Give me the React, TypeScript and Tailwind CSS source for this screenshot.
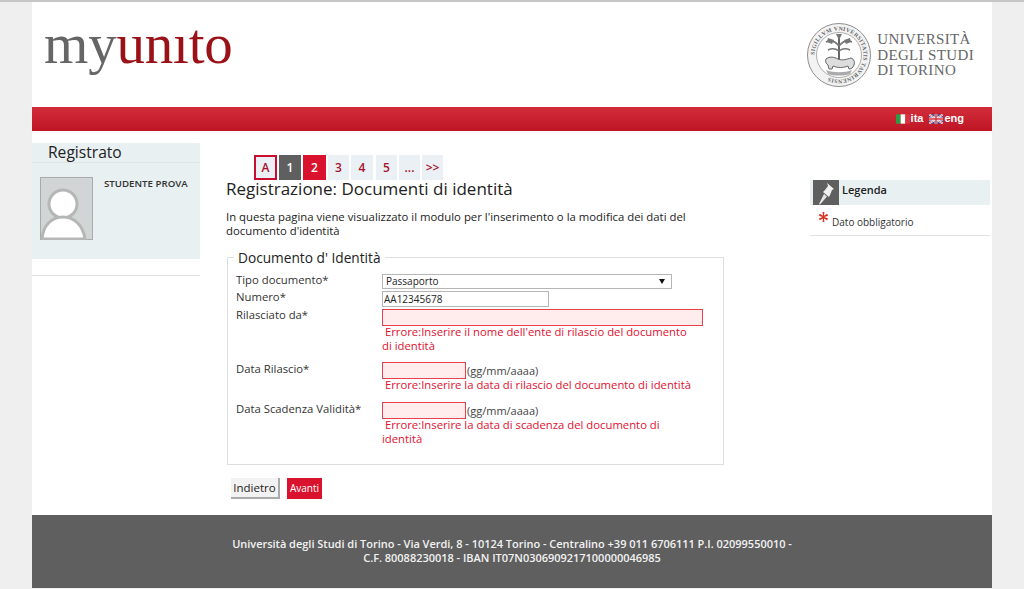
import type { ReactNode } from 'react';

const steps = [
  { label: 'A', cls: 'w-[23px] h-[25px] border-2 border-[#c8102e] bg-[#eaf0f3] text-[#a8112c]' },
  { label: '1', cls: 'w-[22px] bg-[#5f5f5f] text-white ml-[2px]' },
  { label: '2', cls: 'w-[23px] bg-[#d9132e] text-white ml-[2px]' },
  { label: '3', cls: 'w-[21px] bg-[#eaf0f3] text-[#a8112c] ml-[2px]' },
  { label: '4', cls: 'w-[22px] bg-[#eaf0f3] text-[#a8112c] ml-[2px]' },
  { label: '5', cls: 'w-[21px] bg-[#eaf0f3] text-[#a8112c] ml-[3px]' },
  { label: '...', cls: 'w-[21px] bg-[#eaf0f3] text-[#a8112c] ml-[2px]' },
  { label: '>>', cls: 'w-[21px] bg-[#eaf0f3] text-[#a8112c] ml-[2px]' },
];

function Seal() {
  return (
    <svg width="66" height="66" viewBox="0 0 66 66" className="shrink-0">
      <defs>
        <path id="sealRing" d="M33 33 m-24.5 0 a24.5 24.5 0 1 1 49 0 a24.5 24.5 0 1 1 -49 0" />
      </defs>
      <circle cx="33" cy="33" r="31.5" fill="#f3f3f3" stroke="#8f8f8f" strokeWidth="1" />
      <circle cx="33" cy="33" r="22.5" fill="#fff" stroke="#999" strokeWidth="0.8" />
      <text fontSize="5.8" fill="#666" fontFamily="'Liberation Serif', serif" letterSpacing="0.3" fontWeight="bold">
        <textPath href="#sealRing">SIGILLVM VNIVERSITATIS TAVRINENSIS</textPath>
      </text>
      <path d="M33 15v24" stroke="#666" strokeWidth="2" />
      <path d="M33 24c-4-5-9-6-13-4M33 24c4-5 9-6 13-4M33 29c-4-3-7-3-11-1M33 29c4-3 7-3 11-1" stroke="#777" strokeWidth="1.5" fill="none" />
      <path d="M22 16l6 2-2 4-5-2zM44 16l-6 2 2 4 5-2zM30 12h6l-3 6z" fill="#777" />
      <path d="M20 37c4-3 8-2 12 0 5 2 9 0 13-1 3 1 4 4 3 7-1 3-3 4-5 4l-1-3c-5 2-10 2-15 0l-1 3h-3l-1-4c-2-1-3-4-2-6z" fill="#ddd" stroke="#666" strokeWidth="1" />
      <path d="M20 48c7 3 19 3 26 0l-2 4c-6 2-16 2-22 0z" fill="#aaa" />
    </svg>
  );
}

function ItalyFlag() {
  return (
    <svg width="14" height="10" viewBox="0 0 15 10">
      <rect width="5" height="10" fill="#2f9a45" />
      <rect x="5" width="5" height="10" fill="#fff" />
      <rect x="10" width="5" height="10" fill="#d8323c" />
    </svg>
  );
}

function UkFlag() {
  return (
    <svg width="14" height="10" viewBox="0 0 15 10">
      <rect width="15" height="10" fill="#3b4a8c" />
      <path d="M0 0l15 10M15 0L0 10" stroke="#fff" strokeWidth="2" />
      <path d="M0 0l15 10M15 0L0 10" stroke="#d8323c" strokeWidth="0.7" />
      <path d="M7.5 0v10M0 5h15" stroke="#fff" strokeWidth="3" />
      <path d="M7.5 0v10M0 5h15" stroke="#d8323c" strokeWidth="1.6" />
    </svg>
  );
}

function Avatar() {
  return (
    <svg width="53" height="63" viewBox="0 0 53 63" className="shrink-0">
      <rect x="0.5" y="0.5" width="52" height="62" fill="#d2d5d5" stroke="#a9abab" />
      <circle cx="23" cy="27" r="14" fill="#fff" stroke="#b5b6b6" strokeWidth="3" />
      <path d="M2 62c1-14 10-22 21-22s20 8 22 22z" fill="#fff" stroke="#b5b6b6" strokeWidth="3" />
    </svg>
  );
}

function PinIcon() {
  return (
    <div className="w-[26px] h-[25px] bg-[#5f5f5f] flex items-center justify-center">
      <svg width="22" height="24" viewBox="0 0 22 24">
        <path d="M12 2l7 6-2 1-2 5-1 2-6-5 2-2 3-4z" fill="#f1f1f1" />
        <path d="M9 13l-5 10 1 .5 7-8z" fill="#e6e6e6" />
      </svg>
    </div>
  );
}

function Row({ label, children, className, labelClass = '' }: { label: string; children: ReactNode; className: string; labelClass?: string }) {
  return (
    <div className={`flex ${className}`}>
      <div className={`w-[146px] shrink-0 text-[11.3px] leading-[14px] text-[#333] ${labelClass}`}>{label}</div>
      <div className="flex-1 min-w-0">{children}</div>
    </div>
  );
}

function ErrorText({ children }: { children: ReactNode }) {
  return <div className="w-[314px] text-[11.3px] leading-[14px] text-[#e0102f] -mt-[1px]">&nbsp;{children}</div>;
}

export default function App() {
  return (
    <div className="h-[589px] overflow-hidden bg-[#efefef] border-t-2 border-[#c6c6c6] text-[#222]" style={{ fontFamily: "'Open Sans', 'Noto Sans', sans-serif" }}>
      <div className="w-[960px] ml-[32px] bg-white h-[586px] flex flex-col">
        <header className="h-[105px] flex justify-between">
          <div className="pl-[12px] pt-[10px] text-[57px] leading-[64px] tracking-[-0.2px]" style={{ fontFamily: "'Liberation Serif', serif" }} aria-label="myunito">
            <span className="text-[#666]">my</span>
            <span className="text-[#9a1218]">unıto</span>
          </div>
          <div className="flex items-start pt-[20px] pr-[18px] gap-[5px]">
            <Seal />
            <div className="text-[15px] leading-[15.5px] tracking-[0.35px] text-[#666] pt-[10px] uppercase" style={{ fontFamily: "'Liberation Serif', serif" }}>
              <div>Università</div>
              <div>Degli Studi</div>
              <div>Di Torino</div>
            </div>
          </div>
        </header>

        <div className="h-[24px] bg-gradient-to-b from-[#d22b3b] to-[#bf1523] flex justify-end items-start pt-[5px] pr-[28px] text-[11px] leading-[13px] font-bold text-white" style={{ fontFamily: "'Liberation Sans', sans-serif" }}>
          <div className="flex items-center gap-[1px]"><ItalyFlag /><span>ita</span></div>
          <div className="flex items-center gap-[1px] ml-[6px]"><UkFlag /><span>eng</span></div>
        </div>

        <div className="flex flex-1 min-h-0">
          <aside className="w-[168px] shrink-0 pt-[12px]">
            <div className="h-[116px] bg-[#e9f0f2]">
              <div className="h-[20px] pl-[16px] text-[15.6px] leading-[18px] border-b border-[#dfe6e8] text-[#222]">Registrato</div>
              <div className="flex pl-[8px] pt-[14px] gap-[11px]">
                <Avatar />
                <div className="text-[9.7px] leading-[14px] font-semibold text-[#333]">STUDENTE PROVA</div>
              </div>
            </div>
            <div className="h-[17px] border-b border-[#e2e2e2]" />
          </aside>

          <main className="w-[498px] ml-[26px] shrink-0 pt-[24px]">
            <div className="flex ml-[28px] h-[25px] items-stretch">
              {steps.map((s) => (
                <div key={s.label} className={`flex items-center justify-center text-[12px] font-semibold ${s.cls}`}>{s.label}</div>
              ))}
            </div>
            <h1 className="text-[17px] leading-[20px] font-normal text-[#222] -mt-[1px]">Registrazione: Documenti di identità</h1>
            <p className="text-[11.35px] leading-[14px] text-[#222] mt-[11px] w-[480px]">
              In questa pagina viene visualizzato il modulo per l'inserimento o la modifica dei dati del documento d'identità
            </p>
            <fieldset className="ml-[1px] mt-[12px] w-[497px] h-[215px] border border-[#dedede] pl-[8px] pt-[9px]">
              <legend className="ml-[-2px] px-[4px] text-[13.7px] leading-[15px] text-[#222]">Documento d' Identità</legend>
              <Row label="Tipo documento*" className="h-[17px]" labelClass="-mt-[1px]">
                <div className="relative w-[290px] h-[15px] border border-[#b5b5b5] bg-white text-[10px] leading-[13px] pl-[3px] text-[#222]">
                  Passaporto
                  <span className="absolute right-[6px] top-[4px] w-0 h-0 border-x-[3px] border-x-transparent border-t-[5px] border-t-[#111]" />
                </div>
              </Row>
              <Row label="Numero*" className="h-[18px]" labelClass="-mt-[1px]">
                <input readOnly value="AA12345678" className="block w-[167px] h-[16px] border border-[#b5b5b5] px-[1px] text-[10px] text-[#222] outline-none" />
              </Row>
              <Row label="Rilasciato da*" className="h-[53px]" labelClass="-mt-[1px]">
                <input readOnly className="block w-[321px] h-[17px] border border-[#e8404f] bg-[#ffecec] outline-none" />
                <ErrorText>Errore:Inserire il nome dell'ente di rilascio del documento di identità</ErrorText>
              </Row>
              <Row label="Data Rilascio*" className="h-[40px]">
                <div className="flex items-center">
                  <input readOnly className="block w-[84px] h-[17px] border border-[#e8404f] bg-[#ffecec] outline-none" />
                  <span className="text-[11px] leading-[14px] text-[#444] ml-[1px]">(gg/mm/aaaa)</span>
                </div>
                <ErrorText>Errore:Inserire la data di rilascio del documento di identità</ErrorText>
              </Row>
              <Row label="Data Scadenza Validità*" className="h-[50px]">
                <div className="flex items-center">
                  <input readOnly className="block w-[84px] h-[17px] border border-[#e8404f] bg-[#ffecec] outline-none" />
                  <span className="text-[11px] leading-[14px] text-[#444] ml-[1px]">(gg/mm/aaaa)</span>
                </div>
                <ErrorText>Errore:Inserire la data di scadenza del documento di identità</ErrorText>
              </Row>
            </fieldset>
            <div className="flex mt-[13px] ml-[5px] gap-[7px]">
              <button className="w-[49px] h-[21px] bg-[#f2f2f2] border-r-2 border-b-2 border-[#aaa] text-[11.5px] text-[#222]">Indietro</button>
              <button className="w-[35px] h-[21px] bg-[#d9132e] text-[10px] text-white">Avanti</button>
            </div>
          </main>

          <aside className="w-[180px] ml-[86px] shrink-0 pt-[49px]">
            <div className="h-[25px] bg-[#e9f0f2] pl-[3px] flex items-center gap-[3px]">
              <PinIcon />
              <span className="text-[11px] font-semibold text-[#222] -mt-[5px]">Legenda</span>
            </div>
            <div className="h-[31px] border-b border-[#e2e2e2] flex pl-[8px] pt-[3px]">
              <svg width="11" height="12" viewBox="0 0 24 24" className="mt-[3px]">
                <path d="M10 1h4l-1 8 7-4 2 4-8 3 8 3-2 4-7-4 1 8h-4l1-8-7 4-2-4 8-3-8-3 2-4 7 4z" fill="#d9301f" />
              </svg>
              <span className="text-[10px] leading-[14px] text-[#333] ml-[3px] mt-[7px]">Dato obbligatorio</span>
            </div>
          </aside>
        </div>

        <footer className="h-[73px] bg-[#5f5f5f] flex flex-col items-center pt-[22px] text-[11px] leading-[14px] font-semibold text-[#f2f2f2] tracking-[-0.02px]">
          <div>Università degli Studi di Torino - Via Verdi, 8 - 10124 Torino - Centralino +39 011 6706111 P.I. 02099550010 -</div>
          <div>C.F. 80088230018 - IBAN IT07N0306909217100000046985</div>
        </footer>
      </div>
    </div>
  );
}
